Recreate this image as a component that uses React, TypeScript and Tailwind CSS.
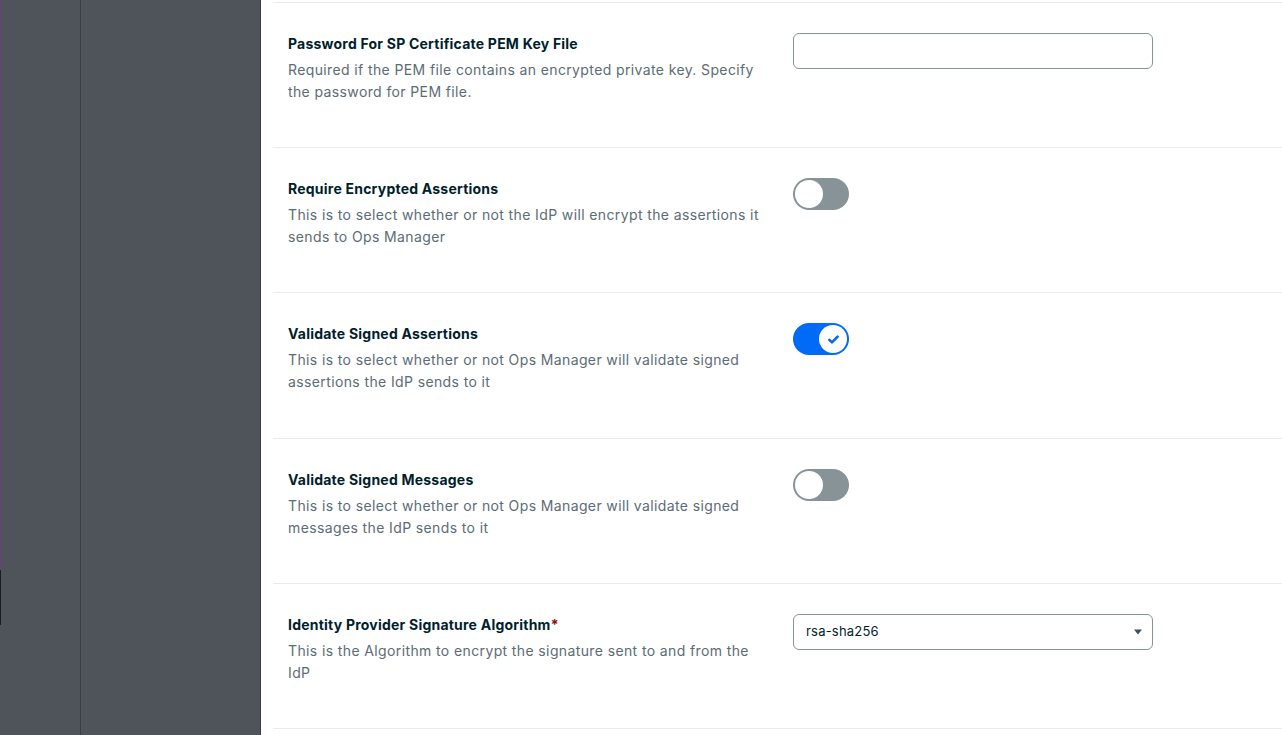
import React, { useState } from 'react';

interface Setting {
  id: string;
  title: string;
  required?: boolean;
  description: string;
  control: 'input' | 'toggle' | 'select';
  defaultOn?: boolean;
}

const SETTINGS: Setting[] = [
  {
    id: 'pem-password',
    title: 'Password For SP Certificate PEM Key File',
    description: 'Required if the PEM file contains an encrypted private key. Specify the password for PEM file.',
    control: 'input',
  },
  {
    id: 'encrypted-assertions',
    title: 'Require Encrypted Assertions',
    description: 'This is to select whether or not the IdP will encrypt the assertions it sends to Ops Manager',
    control: 'toggle',
    defaultOn: false,
  },
  {
    id: 'signed-assertions',
    title: 'Validate Signed Assertions',
    description: 'This is to select whether or not Ops Manager will validate signed assertions the IdP sends to it',
    control: 'toggle',
    defaultOn: true,
  },
  {
    id: 'signed-messages',
    title: 'Validate Signed Messages',
    description: 'This is to select whether or not Ops Manager will validate signed messages the IdP sends to it',
    control: 'toggle',
    defaultOn: false,
  },
  {
    id: 'sig-algorithm',
    title: 'Identity Provider Signature Algorithm',
    required: true,
    description: 'This is the Algorithm to encrypt the signature sent to and from the IdP',
    control: 'select',
  },
];

const Toggle = ({ initial }: { initial?: boolean }) => {
  const [on, setOn] = useState(!!initial);
  return (
    <button
      onClick={() => setOn(!on)}
      className={`relative w-[56px] h-[32px] rounded-full flex items-center px-[2px] ${on ? 'bg-[#016bf8] justify-end' : 'bg-[#889397] justify-start'}`}
    >
      <span className="w-[28px] h-[28px] rounded-full bg-white flex items-center justify-center">
        {on && (
          <svg width="15" height="15" viewBox="0 0 16 16" fill="none">
            <path d="M3.6 8.4l2.8 2.7 6-6.1" stroke="#016bf8" strokeWidth="2.8" strokeLinecap="round" strokeLinejoin="round" />
          </svg>
        )}
      </span>
    </button>
  );
};

const Control = ({ setting }: { setting: Setting }) => {
  if (setting.control === 'input') {
    return (
      <input
        type="password"
        className="w-[360px] h-[36px] rounded-[6px] border border-[#889397] px-3 text-[13px] outline-none"
      />
    );
  }
  if (setting.control === 'toggle') {
    return <Toggle initial={setting.defaultOn} />;
  }
  return (
    <div className="w-[360px] h-[36px] rounded-[6px] border border-[#889397] flex items-center justify-between pl-[12px] pr-[9px] text-[13px] tracking-[0.2px] text-[#001e2b]">
      <span>rsa-sha256</span>
      <svg width="10" height="6" viewBox="0 0 10 6">
        <path d="M1 0.5h8L5 5.5z" fill="#3d4f58" />
      </svg>
    </div>
  );
};

export default function App() {
  return (
    <div className="flex w-[1282px] h-[735px] overflow-hidden bg-white" style={{ fontFamily: 'Inter, "Open Sans", sans-serif' }}>
      {/* left nav */}
      <div className="relative w-[81px] h-full bg-[#4f535a] border-r border-[#3a3d42] shrink-0">
        <div className="absolute left-0 top-0 w-[1px] h-[570px] bg-[#6b3f7a]" />
        <div className="absolute left-0 top-[570px] w-[1px] h-[55px] bg-[#1c1c1c]" />
      </div>
      <div className="w-[180px] h-full bg-[#4f535a] border-r border-[#3a3d42] shrink-0" />

      {/* main */}
      <div className="flex-1 pl-[12px] pt-[2px]">
        {SETTINGS.map((s) => (
          <div key={s.id} className="h-[145.2px] border-t border-[#e8edeb] pt-[31px] pl-[15px] flex">
            <div className="w-[475px] shrink-0">
              <div className="text-[14px] leading-[20px] font-bold tracking-[0.22px] text-[#001e2b]">
                {s.title}
                {s.required && <span className="text-[#970606]">*</span>}
              </div>
              <p className="mt-[5px] text-[14px] leading-[22px] tracking-[0.38px] text-[#5c6c75]">{s.description}</p>
            </div>
            <div className="ml-[30px] -mt-[1px]">
              <Control setting={s} />
            </div>
          </div>
        ))}
        <div className="border-t border-[#e8edeb]" />
      </div>
    </div>
  );
}
